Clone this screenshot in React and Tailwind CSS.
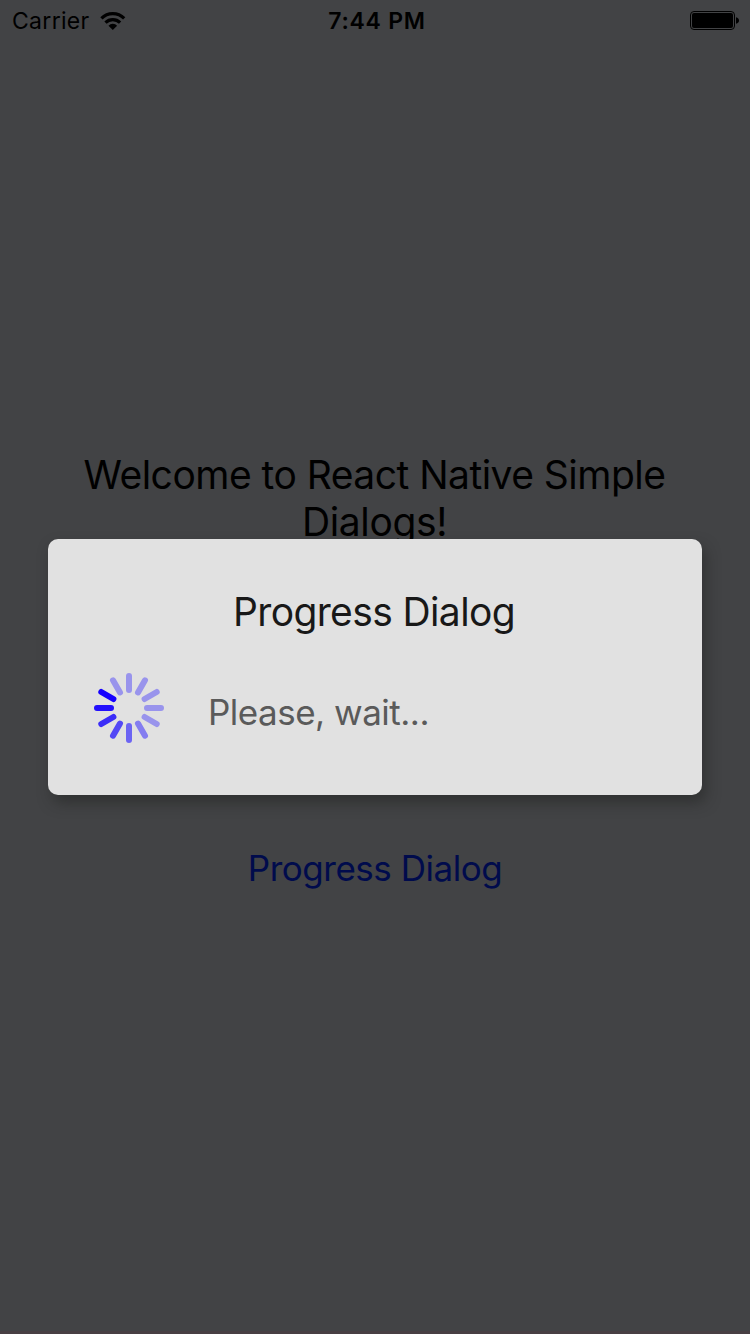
const spokes = [
  '#9994ec', '#9994ec', '#9994ec', '#9994ec', '#9994ec', '#847df0',
  '#6c64f3', '#5348f5', '#3b2df8', '#2310fc', '#1600ff', '#9994ec',
];

function Spinner() {
  return (
    <svg className="size-[70px] shrink-0" viewBox="-35 -35 70 70">
      {spokes.map((color, i) => (
        <line key={i} x1="0" y1="-32" x2="0" y2="-18" stroke={color} strokeWidth="6" strokeLinecap="round" transform={`rotate(${i * 30})`} />
      ))}
    </svg>
  );
}

function Wifi() {
  return (
    <svg className="ml-[10px] h-[18px] w-[26px]" viewBox="0 0 26 18">
      <g fill="none" stroke="#000" strokeWidth="3.2">
        <path d="M1.4 6.4a16.2 16.2 0 0 1 22.800 0" />
        <path d="M5.500 10.600a10.400 10.400 0 0 1 14.600 0" />
      </g>
      <path d="M8.500 13.700a5.800 5.800 0 0 1 8.600 0L12.800 18z" />
    </svg>
  );
}

function Battery() {
  return (
    <svg className="h-[20px] w-[50px]" viewBox="0 0 50 20">
      <rect x="0.5" y="0.5" width="44" height="18" rx="3.5" fill="none" stroke="#000" />
      <rect x="2" y="2" width="41" height="15" rx="2" />
      <path d="M46 6.2c2 .4 3 1.700 3 3.300s-1 2.900-3 3.300z" />
    </svg>
  );
}

function StatusBar() {
  return (
    <header className="grid h-[42px] grid-cols-3 items-center text-[23px] leading-[42px]">
      <div className="flex items-center pl-[12px]">
        <span className="tracking-[0.3px]">Carrier</span>
        <Wifi />
      </div>
      <div className="pl-[4px] text-center font-semibold tracking-[0.75px]">7:44 PM</div>
      <div className="flex justify-end pr-[10px]">
        <Battery />
      </div>
    </header>
  );
}

function ProgressDialog() {
  return (
    <section className="mx-12 flex h-[256px] flex-col rounded-[10px] bg-[#e1e1e1] shadow-[4px_8px_14px_rgba(32,34,32,0.5)]">
      <h2 className="mt-[49px] pr-[2px] text-center text-[39px] leading-[47px] tracking-[-0.62px] text-[#181818]">Progress Dialog</h2>
      <div className="mt-[38px] flex items-center pl-[46px]">
        <Spinner />
        <p className="ml-[44px] mt-[7px] text-[35px] leading-[42px] tracking-[-0.5px] text-[#5a5a5a]">Please, wait...</p>
      </div>
    </section>
  );
}

export default function App() {
  return (
    <main className="grid h-[1334px] w-[750px] overflow-hidden bg-[#424345] font-['Inter','Liberation_Sans',sans-serif] text-black">
      <div className="col-start-1 row-start-1 flex flex-col">
        <StatusBar />
        <h1 className="mt-[409px] pr-[1px] text-center text-[39px] leading-[47px] tracking-[-0.52px]">
          Welcome to React Native Simple<br />
          <span className="tracking-[-0.35px]">Dialogs!</span>
        </h1>
        <button className="mt-[302px] text-center text-[35px] leading-[42px] tracking-[-0.48px] text-[#000b4c]">Progress Dialog</button>
        <div className="mt-auto h-[3px] bg-[#483f43]" />
      </div>
      <div className="col-start-1 row-start-1 flex flex-col justify-center">
        <ProgressDialog />
      </div>
    </main>
  );
}
